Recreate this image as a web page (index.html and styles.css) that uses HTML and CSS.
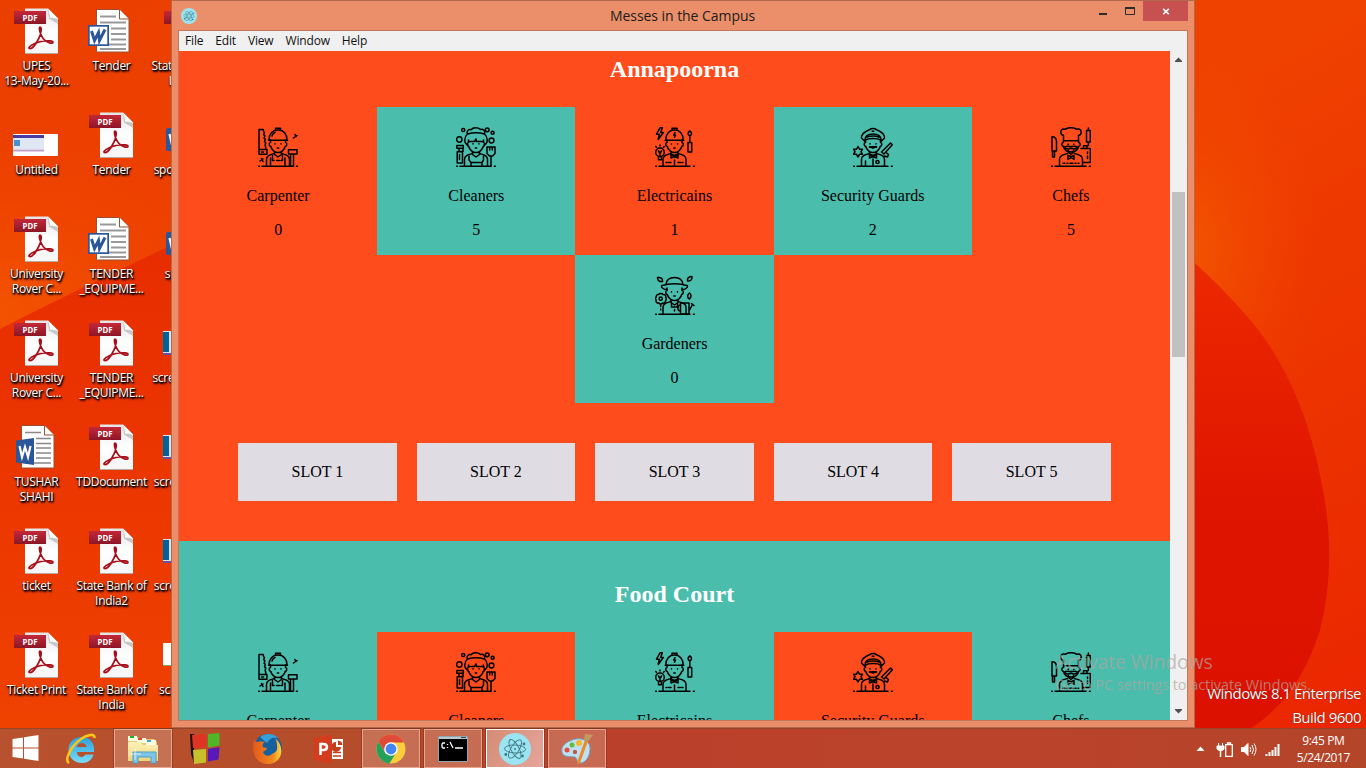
FILE: index.html
```html
<!DOCTYPE html>
<html lang="en">
<head>
<meta charset="utf-8">
<title>Messes in the Campus</title>
<link rel="stylesheet" href="styles.css">
</head>
<body>
<svg class="sprite" aria-hidden="true">
  <defs>
    <linearGradient id="pdfRed" x1="0" y1="0" x2="0" y2="1"><stop offset="0" stop-color="#c4283a"/><stop offset="1" stop-color="#8c1626"/></linearGradient>
    <linearGradient id="paper" x1="0" y1="0" x2="0" y2="1"><stop offset="0" stop-color="#e4e4e4"/><stop offset=".5" stop-color="#fff"/><stop offset="1" stop-color="#f6f6f6"/></linearGradient>
    <linearGradient id="ieBlue" x1="0" y1="0" x2="0" y2="1"><stop offset="0" stop-color="#2a9fdc"/><stop offset="1" stop-color="#7adcf8"/></linearGradient>
    <linearGradient id="folder" x1="0" y1="0" x2="0" y2="1"><stop offset="0" stop-color="#fdf3b8"/><stop offset="1" stop-color="#ecd47c"/></linearGradient>
    <linearGradient id="fox" x1="0" y1="0" x2="1" y2="0"><stop offset="0" stop-color="#e4581c"/><stop offset=".7" stop-color="#f08a1c"/><stop offset="1" stop-color="#fbd83c"/></linearGradient>
  </defs>

  <symbol id="pdf" viewBox="0 0 48 48">
    <path d="M13 1.500h23l10 10v34.500H13z" fill="url(#paper)"/>
    <path d="M36 1.500 46 11.500l-7.500-1z" fill="#fff"/><path d="M36 1.500c1.500 4 2 7 2 9.500 3-.5 5.500 0 8 1.500V17l-9-5.500z" fill="#777" opacity=".35"/>
    <path d="M13 46.500h33" stroke="#b8a9a0"/>
    <path d="M2 4h32v13H2z" fill="url(#pdfRed)"/>
    <text x="18" y="14" class="pdf-text" textLength="15" lengthAdjust="spacingAndGlyphs">PDF</text>
    <path d="M28 20c2 0 1.500 6-1.500 12S20 42 17.500 41.500 21 36 29 34.500s12-.5 12 1-6 .5-9.500-3.500S26.500 20 28 20z" fill="none" stroke="#a80d18" stroke-width="1.700"/>
  </symbol>

  <symbol id="word" viewBox="0 0 48 48">
    <path d="M9.500 2.500h23l9.500 9.500v33H9.500z" fill="#fff" stroke="#985030"/>
    <path d="M32.500 2.500V12H42" fill="#fff" stroke="#985030"/>
    <path d="M13 9.500h16M13 15.500h26M24 21.500h15M24 27h15M24 32.500h15M13 37.500h26M13 42h26" stroke="#999" stroke-width="2"/>
    <path d="M1 18h21v21H1z" fill="#2b579a"/><path d="M2.700 19.700h17.600v17.600H2.700z" fill="#fff"/>
    <path d="m4.500 24 3 9.500 4-8 1 8 5.500-11" fill="none" stroke="#2b579a" stroke-width="3"/>
  </symbol>

  <symbol id="word-new" viewBox="0 0 48 48">
    <path d="M9.500 2.500h23l9.500 9.500v33H9.500z" fill="#fff" stroke="#985030"/>
    <path d="M32.500 2.500V12H42" fill="#fff" stroke="#985030"/>
    <path d="M13 9.500h16M24 15.500h15M24 20.500h15M24 25h15M24 30h15M24 35h15M13 40h26" stroke="#888" stroke-width="1.600"/>
    <path d="M4 17.500 22 15v27L4 39.500z" fill="#2b579a"/>
    <path d="m7.500 23 2.500 11 3-10 3 10 2.500-11" fill="none" stroke="#fff" stroke-width="2.200"/>
  </symbol>

  <symbol id="picture" viewBox="0 0 48 48">
    <path d="M1 23h45v22H1z" fill="#fff"/><path d="M1 24h31v3H1z" fill="#4a3ba0"/><path d="M1 27h31v11H1z" fill="#dfe6f4"/><path d="M2 29h6v6H2z" fill="#4a8fd0"/><path d="M1 38.500h31v2H1z" fill="#c0a0c8"/>
  </symbol>
  <symbol id="shot" viewBox="0 0 48 48">
    <path d="M1 12h45v24H1z" fill="#d8e4ec"/><path d="M1 13h6v20H1z" fill="#00629c"/><path d="M9 14h36v20H9z" fill="#c4dce8"/><path d="M1 34h45v2H1z" fill="#6a4fa0"/>
  </symbol>
  <symbol id="shot-white" viewBox="0 0 48 48"><path d="M1 12h45v22H1z" fill="#fff"/><path d="M1 34h45v1H1z" fill="#88a060"/></symbol>

  <symbol id="ground" viewBox="0 0 40 40"><path d="M4 39.200h31M.700 39.200h.700M38.400 39.200h.900"/></symbol>
  <symbol id="face" viewBox="0 0 40 40">
    <path d="M12.500 13v2.500c-1.800.2-1.800 3.500.3 4C13.500 23 17 25.500 20 25.500s6.500-2.500 7.200-6c2.100-.5 2.100-3.800.3-4V13M16.500 25v2.500L20 30l3.500-2.500V25"/>
    <path d="M17 16.700v.3M23 16.700v.3M19.300 21h1.400"/>
  </symbol>
  <symbol id="body" viewBox="0 0 40 40"><path d="M16.500 26.500c-5 1.500-8 2-8 6V39M23.500 26.500c5 1.500 8 2 8 6V39"/></symbol>

  <symbol id="carpenter" viewBox="0 0 40 40">
    <path d="M1 2.500h4.300l.200 2 1 1-.8 2 1.200 1.500-.8 2 1.200 1.500-.8 2 1.200 1.500-.5 2 .8 4.500h.9v4.700H1zM1 22.500h7M3.500 25h2"/>
    <path d="M11 13c0-6 3.500-10 9-10s9 4 9 10M10.500 13.300h19M17.500 3V1.200h5V3M14 9c.5-1.800 1.500-3 3-3.500"/>
    <use href="#face"/><use href="#body"/>
    <path d="M14.500 28.500v5h1.500M24.500 28.500v5H23M18.500 33.500h3M12.500 31v7M27 31v7M30.500 22.800H39V27h-8.500zM32.500 27.500V39M35.500 27.500V39"/>
    <path d="m35.500 11 3.500-2.500M37 7.500l1 2M2 34l3-2M3.500 31.500l1.500 3"/><use href="#ground"/>
  </symbol>
  <symbol id="cleaner" viewBox="0 0 40 40">
    <circle cx="7.200" cy="3" r="1.600"/><circle cx="3.300" cy="12.500" r="2.700"/><circle cx="31.200" cy="2.800" r="1.900"/><circle cx="36.600" cy="5.800" r="1.500"/><circle cx="35.500" cy="13.500" r="2.400"/>
    <path d="M11.500 7C10 4 13 2 15 2.800 17 .2 22 .2 24.500 2.500c2.500-1 5 1.500 4 4.500M11.500 7c5-1.500 12-1.500 17 0M11.500 7C8 10 7.500 16 12 18M28.500 7c3.500 3 4 9-.5 11M12.500 14.500h6L20 12l.5 2.500h7"/>
    <use href="#face"/><use href="#body"/>
    <path d="M.8 18.500h6.500v2.800H.8zM3 21.500v3h4v-3M1.200 24.700h5.300V36H1.200zM3.500 27.500v5M31 20h8v6.500l-2.500 2.500h-3L31 26.500zM33.700 20v3M36.300 20v3M35 29v10M15 39v-3.500h11V39M13 29v4l2 2.500M27.500 29v4l-1.500 2.500"/>
    <use href="#ground"/>
  </symbol>
  <symbol id="electrician" viewBox="0 0 40 40">
    <path d="M5 .8 1.500 7.200h2.800L3.200 12.500 8.300 5.500H5.700L7.300.8zM10.800 13c0-6 3.500-10 8.700-10s8.700 4 8.700 10M10.200 13.300h18.600M17 3V1.200h5V3M20 5.700 18.700 8h1.800l-1 2.300"/>
    <use href="#face" x="-.5"/><use href="#body" x="-.5"/>
    <path d="M34.800 4c2.300 1.500 2.300 3.500 0 5-2.300-1.500-2.300-3.500 0-5zM34.800 9v6.500M33 15.500h3.700V25H33z"/>
    <circle cx="5" cy="25.200" r="4.300"/><path d="M3.500 29.500v3.300h3v-3.300M3.500 24 5 26.500 6.500 24M5 26.500v3M5 18v1M.7 19.500l.8.8M9.300 19.500l-.8.800"/>
    <path d="m16 27 3.500 1.500L23 27v4l-3.500-1.500L16 31zM19.500 33v6M11 35.500h1M13.500 35.500h2.500M23 35.500h2.500M27 35.500h1"/>
    <use href="#ground"/>
  </symbol>
  <symbol id="guard" viewBox="0 0 40 40">
    <path d="M12 14.500 8.500 11C8 10 8.500 9 9.500 7.500 11 5 15 3.500 17 2.500c1-1.500 5-1.500 6 0 2 1 6 2.500 7.500 5 1 1.500 1.500 2.500 1 3.500L28 14.500M12 13c0-4 3-6 8-6s8 2 8 6c-4-2-12-2-16 0zM14 10.200c3-1.500 9-1.500 12 0M19.200 4.300h1.600"/>
    <use href="#face"/><use href="#body"/>
    <path d="M16.500 19.800h7v.5h-7zM5 19.500l1.500 2.700h3L8 24.700l1.500 2.600h-3L5 30l-1.500-2.700h-3L2 24.700.5 22.200h3zM37.500 16l1.800 1.800L31 27l-2.500-2zM33 25.500l2.500 2-1 2.500-3-1"/>
    <path d="m16.500 27 3.500 1.500 3.500-1.500v4L20 29.500 16.500 31zM20 32v7M12.500 34v5"/><circle cx="24.500" cy="35" r="1.600"/>
    <use href="#ground"/>
  </symbol>
  <symbol id="gardener" viewBox="0 0 40 40">
    <path d="M11 9.500C11.500 4.500 14.500 2.500 19.500 2.500S27.500 4.500 28 9.500M11 9.500c5-1 12-1 17 0M11 9.700C9 11 7 9.500 6.500 11s3 4 5.500 3.500M28 9.700c2 1.300 4-.2 4.500 1.300s-3 4-5.500 3.500"/>
    <path d="M2.500 2.500c3-.5 5.500 1 5 4-3 .5-5-1-5-4zM37 1.500c-3 0-5 1.500-4.500 4.500 3 .2 4.800-1.500 4.500-4.500zM34.500 18c-2.500 2-2.500 4.500 0 6 2-2 2-4.500 0-6z"/>
    <use href="#face" x="-.5"/><use href="#body" x="-.5"/>
    <circle cx="5.700" cy="23.700" r="1.600"/><path d="M3.500 19.500c1-1.500 3.500-1.500 4.500 0 2-.3 3.300 1.200 2.600 2.800 1 1 1 2.600-.1 3.300.3 2-1.500 3-2.700 2.400-1 1.400-3.200 1.200-4 0-2 .3-3-1-2.600-2.800-1.200-1-.9-2.600.1-3.200-.3-1.800 1-2.800 2.200-2.500zM5.700 29.500v2M5.700 34v1"/>
    <path d="M25.500 28h8.500v11h-8.500zM34 36l3.500-6.500M36.500 28.500l2.500 2M25.500 30c-3.500 0-3.500 6 0 6M16.500 28v4h6v-4M19.500 34.500v1.500"/>
    <use href="#ground"/>
  </symbol>
  <symbol id="chef" viewBox="0 0 40 40">
    <path d="M12.500 15V8.500C8 7 9.500.5 14.500 2.200 17 .2 23 .2 25.500 2.200 30.500.5 32 7 27.500 8.500V15M12.500 13.700h15"/>
    <path d="M12 15.500c-1.800 1-1.500 3.500.5 4 .7 3.500 4 5.500 7.500 5.500s6.800-2 7.500-5.500c2-.5 2.300-3 .5-4M17 17.200h.5M22.500 17.200h.5M13 20.300c2.500-1.500 4.500-.8 7-.8s4.500-.7 7 .8c-2 2-4.500 2-7 1-2.500 1-5 1-7-1zM17.500 23.500v2l2.500 2 2.500-2v-2"/>
    <use href="#body"/>
    <path d="M1 9.800c3 0 4.500 2 4.500 5V24H1zM1.500 24v6h2v-6M35.500 3.500h3.800V15h-3.800zM37.400 1v2M37.400 15.500v3M30 21.500h9.300v14H32M32.500 21v-2.200h3.500V21M36.500 25v1.500M36.500 29v2.500"/>
    <path d="m17 28.500 3 1.200 3-1.200v4l-3-2-3 2zM12 36.200h2M16 36.200h1M19 36.200h3M24 36.200h1M27 36.200h1"/>
    <use href="#ground"/>
  </symbol>

  <symbol id="electron" viewBox="0 0 32 32">
    <circle cx="16" cy="16" r="16" fill="#9be4f1"/>
    <g fill="none" stroke="#3f7783" stroke-width=".9"><ellipse cx="16" cy="16" rx="10.500" ry="4" transform="rotate(2 16 16)"/><ellipse cx="16" cy="16" rx="10.500" ry="4" transform="rotate(62 16 16)"/><ellipse cx="16" cy="16" rx="10.500" ry="4" transform="rotate(122 16 16)"/></g>
    <g fill="#3f7783"><circle cx="16" cy="16" r="1"/><circle cx="25" cy="11" r="1.400"/><circle cx="6.800" cy="21.500" r="1.400"/><circle cx="23.500" cy="23" r="1.400"/></g>
  </symbol>
</svg>

<main class="desktop">
  <svg class="wallpaper" viewBox="0 0 1366 768" aria-hidden="true">
    <defs>
      <linearGradient id="sky" x1="0" y1="0" x2="1" y2="1"><stop offset="0" stop-color="#eb3f00"/><stop offset=".5" stop-color="#ef4100"/><stop offset="1" stop-color="#ea2400"/></linearGradient>
      <radialGradient id="glow"><stop offset="0" stop-color="#f35400"/><stop offset="1" stop-color="#f04400" stop-opacity="0"/></radialGradient>
      <linearGradient id="low" x1="0" y1="0" x2="0" y2="1"><stop offset="0" stop-color="#e72c00"/><stop offset=".4" stop-color="#eb3500"/><stop offset="1" stop-color="#ef4300"/></linearGradient>
      <linearGradient id="petal" x1="0" y1="0" x2="0" y2="1"><stop offset="0" stop-color="#ee2c00"/><stop offset=".5" stop-color="#e01500"/><stop offset="1" stop-color="#db1000"/></linearGradient>
    </defs>
    <path d="M0 0h1366v768H0z" fill="url(#sky)"/>
    <ellipse cx="1190" cy="250" rx="130" ry="210" fill="url(#glow)"/>
    <ellipse cx="0" cy="310" rx="260" ry="180" fill="url(#glow)"/>
    <path d="M0 329Q70 293 220 222V768H0z" fill="url(#low)"/>
    <path d="M1150 230Q1195 256 1253 323 1303 385 1321 480 1338 560 1320 630 1300 695 1253 727L1150 768z" fill="url(#petal)"/>
  </svg>

  <div class="shortcuts">
    <div class="shortcut"><svg><use href="#pdf"/></svg><span>UPES<br>13-May-20...</span></div>
    <div class="shortcut"><svg><use href="#picture"/></svg><span>Untitled</span></div>
    <div class="shortcut"><svg><use href="#pdf"/></svg><span>University<br>Rover C...</span></div>
    <div class="shortcut"><svg><use href="#pdf"/></svg><span>University<br>Rover C...</span></div>
    <div class="shortcut"><svg><use href="#word-new"/></svg><span>TUSHAR<br>SHAHI</span></div>
    <div class="shortcut"><svg><use href="#pdf"/></svg><span>ticket</span></div>
    <div class="shortcut"><svg><use href="#pdf"/></svg><span>Ticket Print</span></div>
    <div class="shortcut"><svg><use href="#word"/></svg><span>Tender</span></div>
    <div class="shortcut"><svg><use href="#pdf"/></svg><span>Tender</span></div>
    <div class="shortcut"><svg><use href="#word"/></svg><span>TENDER<br>_EQUIPME...</span></div>
    <div class="shortcut"><svg><use href="#pdf"/></svg><span>TENDER<br>_EQUIPME...</span></div>
    <div class="shortcut"><svg><use href="#pdf"/></svg><span>TDDocument</span></div>
    <div class="shortcut"><svg><use href="#pdf"/></svg><span>State Bank of<br>India2</span></div>
    <div class="shortcut"><svg><use href="#pdf"/></svg><span>State Bank of<br>India</span></div>
    <div class="shortcut"><svg><use href="#pdf"/></svg><span>State Bank of<br>India 3</span></div>
    <div class="shortcut"><svg><use href="#word-new"/></svg><span>sponsorship</span></div>
    <div class="shortcut"><svg><use href="#word-new"/></svg><span>sponsor</span></div>
    <div class="shortcut"><svg><use href="#shot"/></svg><span>screenshot 1</span></div>
    <div class="shortcut"><svg><use href="#shot"/></svg><span>screenshot2</span></div>
    <div class="shortcut"><svg><use href="#shot"/></svg><span>screenshot3</span></div>
    <div class="shortcut"><svg><use href="#shot-white"/></svg><span>screensho</span></div>
  </div>

  <div class="build"><div>Windows 8.1 Enterprise</div><div>Build 9600</div></div>

  <section class="window">
    <header class="titlebar">
      <svg class="app-icon"><use href="#electron"/></svg>
      <h1>Messes in the Campus</h1>
      <div class="controls">
        <svg class="control-icons" viewBox="0 0 44 20"><path d="M0 12h8v2H0z" fill="#2b2b2b"/><path d="M26.500 7.500h9v6h-9z" fill="none" stroke="#2b2b2b"/><path d="M26 6h10v2H26z" fill="#2b2b2b"/></svg>
        <div class="close"><svg viewBox="0 0 8 8"><path d="m.8 1 6.400 6M7.200 1 .8 7" stroke="#fff" stroke-width="1.700"/></svg></div>
      </div>
    </header>
    <div class="client">
      <nav class="menu"><span>File</span><span>Edit</span><span>View</span><span>Window</span><span>Help</span></nav>
      <div class="viewport">
        <div class="page">
          <section class="mess coral">
            <h2>Annapoorna</h2>
            <div class="staff">
              <div class="role"><svg><use href="#carpenter"/></svg><p>Carpenter</p><p>0</p></div>
              <div class="role alt"><svg><use href="#cleaner"/></svg><p>Cleaners</p><p>5</p></div>
              <div class="role"><svg><use href="#electrician"/></svg><p>Electricains</p><p>1</p></div>
              <div class="role alt"><svg><use href="#guard"/></svg><p>Security Guards</p><p>2</p></div>
              <div class="role"><svg><use href="#chef"/></svg><p>Chefs</p><p>5</p></div>
              <div class="role alt"><svg><use href="#gardener"/></svg><p>Gardeners</p><p>0</p></div>
            </div>
            <div class="slots"><div>SLOT 1</div><div>SLOT 2</div><div>SLOT 3</div><div>SLOT 4</div><div>SLOT 5</div></div>
          </section>
          <section class="mess teal">
            <h2>Food Court</h2>
            <div class="staff">
              <div class="role"><svg><use href="#carpenter"/></svg><p>Carpenter</p></div>
              <div class="role alt"><svg><use href="#cleaner"/></svg><p>Cleaners</p></div>
              <div class="role"><svg><use href="#electrician"/></svg><p>Electricains</p></div>
              <div class="role alt"><svg><use href="#guard"/></svg><p>Security Guards</p></div>
              <div class="role"><svg><use href="#chef"/></svg><p>Chefs</p></div>
            </div>
          </section>
        </div>
        <div class="scrollbar">
          <svg viewBox="0 0 17 17"><path d="M5 11V10l3.500-3.500L12 10v1z" fill="#505050"/></svg>
          <div class="track"><div class="thumb"></div></div>
          <svg viewBox="0 0 17 17"><path d="M5 6v1l3.500 3.500L12 7V6z" fill="#505050"/></svg>
        </div>
      </div>
    </div>
  </section>

  <div class="activate"><div class="activate-title">Activate Windows</div><div class="activate-text">Go to PC settings to activate Windows.</div></div>

  <footer class="taskbar">
    <div class="start"><svg width="27" height="27" viewBox="0 0 27 27" fill="#fff"><path d="M.5 4 11 2.500v10H.5zM12 2.300 26.500 0v12.500H12zM.5 13.500H11v10L.5 22zM12 13.500h14.500V26L12 23.800z"/></svg></div>
    <div class="task"><svg width="32" height="32" viewBox="0 0 32 32"><path d="M16.500 4C8 4 3.500 10 3.500 17S9 30 17 30c6 0 10-3 11.500-8.500h-8c-2.500 4-8.500 3-8.500-2.500h17C30 10 25 4 16.500 4zM12 14c.5-5.500 9-5.500 9.500 0z" fill="url(#ieBlue)" fill-rule="evenodd"/><path d="M4 30C-1 27 6 13 16 6 22 1.500 30 0 29.500 5" fill="none" stroke="#fbc516" stroke-width="2.600"/></svg></div>
    <div class="task open"><svg width="34" height="32" viewBox="0 0 34 32"><path d="M2 4h10l2 2h14l3 3v19H3z" fill="#e6cb70"/><path d="M2 3h9v5H2zM11 5h9v5h-9zM20 7h10v5H20z" fill="#fffbe0"/><path d="M4 3h4v2H4z" fill="#17b52e"/><path d="M12 5h4v2h-4z" fill="#e04828"/><path d="M21 7h4v2h-4z" fill="#3aa4e6"/><path d="M2 9h12l3 3h15v16H2z" fill="url(#folder)"/><path d="M7 19h23v11h-5v-6H12v6H7z" fill="#7fc5e4" stroke="#4e9fc6"/><path d="M9 15v12M3 21h12" stroke="#fff" opacity=".7"/></svg></div>
    <div class="task"><svg width="30" height="32" viewBox="0 0 30 32"><path d="M0 1h4v29l-3-9z" fill="#241018"/><path d="m2 2 14-1v14L3 15z" fill="#df3424"/><path d="m18 1 11.500-1v12.500L18 14.500z" fill="#4fb625"/><path d="m3 17 13-1v13.500L4 31z" fill="#c8c02a"/><path d="m18 16 11.500-2-1 12.500L18 28.500z" fill="#5918b8"/></svg></div>
    <div class="task"><svg width="32" height="32" viewBox="0 0 32 32"><circle cx="17" cy="15" r="14" fill="#17609f"/><path d="M9 4c5-4 14-4 18 1-6-1-9 1-11 5z" fill="#36a1d6"/><path d="M3 7c1 1 2 2 4 2 3-1 5 0 7-.5-2 2-3 3.500-2 5.500 1 1 4 0 4 2l-4 3c1 4 6 5 9 2 3-1 6-3 5-8 0-4-1-6-2-8 11 9 7 26-7 26C4 31 0 18 3 7z" fill="url(#fox)"/></svg></div>
    <div class="task"><svg width="30" height="30" viewBox="0 0 30 30"><path d="M16 5h13v20H16z" fill="#fff"/><path d="M19 18.500h8M19 22h8" stroke="#c43e1c" stroke-width="1.400"/><path d="M22 8v5h5a5 5 0 1 1-5-5zM24 6.500a5 5 0 0 1 4.500 4.500H24z" fill="#c43e1c"/><path d="m0 4 18-4v30L0 26z" fill="#d33d1d"/><path d="M6.500 21V10h3c4.500 0 4.500 6 0 6h-3" fill="none" stroke="#fff" stroke-width="2.600"/></svg></div>
    <div class="task open"><svg width="30" height="30" viewBox="0 0 30 30"><circle cx="15" cy="15" r="14.500" fill="#fbcd3c"/><path d="M2.400 7.700A14.500 14.500 0 0 1 28 8.500H15L9 18z" fill="#df4b37"/><path d="M2.400 7.700a14.500 14.500 0 0 0 11 21.700L20 19l-10 1z" fill="#24a05c"/><circle cx="15" cy="15" r="6.800" fill="#fff"/><circle cx="15" cy="15" r="5.400" fill="#4385f3"/></svg></div>
    <div class="task open"><svg width="30" height="26" viewBox="0 0 30 26"><path d="M.5.500h29v25H.500z" fill="#000" stroke="#8fa7b0"/><path d="M1 1h28v2H1z" fill="#b9c8ce"/><path d="M23 1h5v1h-5z" fill="#345"/><path d="M7 7H5L4 8v3l1 1h2M9.500 8v1M9.500 11v1M12 6l3 6M17 12h8" fill="none" stroke="#fff" stroke-width="1.300"/></svg></div>
    <div class="task open active"><svg width="32" height="32"><use href="#electron"/></svg></div>
    <div class="task open"><svg width="32" height="32" viewBox="0 0 32 32"><path d="M9 8C18 3 29 7 29 15c0 8-4 15-10 15-4 0-2-5-5-6-4-1-12 1-13-5C0 14 4 10 9 8z" fill="#bfe0f2" stroke="#6fa8c8"/><circle cx="6" cy="17" r="2.500" fill="#e84a3c"/><circle cx="11" cy="12" r="2.500" fill="#65bb3a"/><circle cx="18" cy="10" r="3" fill="#f4b728"/><circle cx="14" cy="19" r="2.200" fill="#b65f4c"/><path d="m24 7 3 1-8 22-3 1 .5-3z" fill="#ec8b26"/><path d="m23 7 1-6 8 1-4.500 6z" fill="#c39a62"/></svg></div>
    <div class="tray">
      <svg width="84" height="20" viewBox="0 0 84 20" fill="none" stroke="#fff"><path d="M.5 12 4.500 7.500l4 4.500z" fill="#fff" stroke="none"/><path d="M22.500 4v3M26.500 4v3M21 7h7v3l-2 1.500h-3L21 10z" fill="#fff"/><path d="M24.500 11v7" stroke-width="1.500"/><path d="M29.700 5.700h6.600v11.600h-6.600zM31.500 5V4h3v1" stroke-width="1.300"/><path d="M45.500 8.500h2.500l4-4v12l-4-4h-2.500z" fill="#fff"/><path d="M54 8q1.500 2.500 0 5M56 6q3 4.500 0 9M58 4.500q4 6 0 12"/><path d="M70.500 17v-2M73.500 17v-4M76.500 17v-6M79.500 17V8M82.500 17V5" stroke-width="2"/></svg>
      <div class="clock"><div>9:45 PM</div><div>5/24/2017</div></div>
    </div>
  </footer>
</main>
</body>
</html>
```
FILE: styles.css
```css
* { box-sizing: border-box; }
body { margin: 0; font-family: "Open Sans", "Noto Sans", sans-serif; }
.sprite { position: absolute; width: 0; height: 0; }
.desktop { position: relative; width: 1366px; height: 768px; overflow: hidden; display: flex; flex-direction: column; justify-content: space-between; }
.wallpaper { position: absolute; inset: 0; width: 1366px; height: 768px; }

.shortcuts { position: relative; display: grid; grid-auto-flow: column; grid-template-rows: repeat(7, 104px); grid-template-columns: repeat(3, 75px); justify-content: start; }
.shortcut { display: flex; flex-direction: column; align-items: center; padding-top: 7px; color: #fff; font-size: 12px; line-height: 15px; letter-spacing: -.3px; text-align: center; white-space: nowrap; text-shadow: 1px 1px 1px #000, 0 1px 2px #000, 1px 2px 2px #000; }
.shortcut svg { width: 48px; height: 48px; margin: 0 3px 3px 0; }
.shortcut span { margin-left: -2px; }
.pdf-text { font: bold 9px "Open Sans", sans-serif; fill: #fff; text-anchor: middle; text-shadow: none; letter-spacing: 0; }

.build { position: absolute; right: 5px; top: 681px; color: #fff; font-size: 15px; line-height: 24px; letter-spacing: -.5px; text-align: right; text-shadow: 0 0 1px #400; }

.window { position: absolute; left: 171px; top: 0; width: 1024px; height: 728px; display: flex; flex-direction: column; padding: 0 6px 6px; background: #ea8f69; border: 1px solid #b3694d; }
.titlebar { display: grid; grid-template-columns: 1fr auto 1fr; height: 29px; align-items: center; }
.app-icon { width: 16px; height: 16px; margin-left: 3px; }
.titlebar h1 { margin: 0 0 0 -1px; font-size: 14px; font-weight: 400; letter-spacing: -.05px; color: #1c1c1c; }
.controls { display: flex; align-self: start; justify-content: flex-end; }
.control-icons { width: 44px; height: 20px; }
.close { display: flex; align-items: center; justify-content: center; width: 45px; height: 20px; background: #c75050; }
.close svg { width: 8px; height: 7px; margin-top: 1px; }
.client { flex: 1; min-height: 0; display: flex; flex-direction: column; border: 1px solid #c2775a; }
.menu { display: flex; gap: 12px; height: 20px; padding-left: 6px; background: #f0f0f0; font-size: 12px; line-height: 20px; letter-spacing: -.17px; color: #111; }
.viewport { display: flex; flex: 1; min-height: 0; overflow: hidden; }
.page { flex: 1; height: 100%; overflow: hidden; font-family: "Liberation Serif", serif; font-size: 16px; line-height: 18px; color: #000; }
.mess { height: 525px; padding-top: 40px; }
.mess:first-child { margin-top: -35px; }
.mess h2 { margin: 0 0 24px; font-size: 24px; line-height: 27px; text-align: center; color: #fff; }
.coral { background: #ff4c1c; }
.teal { background: #4abdac; }
.coral .alt { background: #4abdac; }
.teal .alt { background: #ff4c1c; }
.staff { display: flex; flex-wrap: wrap; justify-content: center; }
.role { width: 20%; height: 148px; padding-top: 20px; text-align: center; }
.role svg { display: block; width: 40px; height: 40px; margin: 0 auto 20px; fill: none; stroke: #000; stroke-width: 1.5; stroke-linejoin: round; stroke-linecap: round; }
.role p { margin: 0 0 16px; }
.slots { display: flex; justify-content: center; gap: 20px; padding-top: 40px; }
.slots div { width: 16%; height: 58px; background: #dfdce3; line-height: 58px; text-align: center; }

.scrollbar { display: flex; flex-direction: column; width: 17px; background: #f0f0f0; }
.scrollbar svg { width: 17px; height: 17px; }
.track { flex: 1; padding: 124px 2px 0; }
.thumb { height: 165px; background: #c1c1c1; }

.activate { position: absolute; left: 1055px; top: 650px; color: rgba(175, 165, 160, .7); white-space: nowrap; }
.activate-title { font-size: 19.5px; line-height: 24px; letter-spacing: -.15px; }
.activate-text { font-size: 14.5px; line-height: 22px; letter-spacing: -.06px; }

.taskbar { position: absolute; left: 0; bottom: 0; width: 1366px; height: 40px; display: flex; background: linear-gradient(90deg, #b8512d, #b54d2b 25%, #bb402b 45%, #bb432b 75%, #b34529); border-top: 1px solid #96452b; }
.start, .task { display: flex; align-items: center; justify-content: center; }
.start { width: 50px; }
.task { width: 58px; margin: 0 2px; border: 1px solid transparent; }
.open { background: rgba(220, 170, 150, .38); border-color: rgba(255, 205, 185, .6); box-shadow: 0 0 0 1px rgba(110, 35, 15, .4); }
.active { background: linear-gradient(120deg, #d48c74, #e6a59c); border-color: #fff; }
.tray { display: flex; align-items: center; gap: 17px; margin-left: auto; padding-right: 16px; }
.clock { color: #fff; font-size: 12px; line-height: 17px; letter-spacing: -.4px; text-align: center; }
```
